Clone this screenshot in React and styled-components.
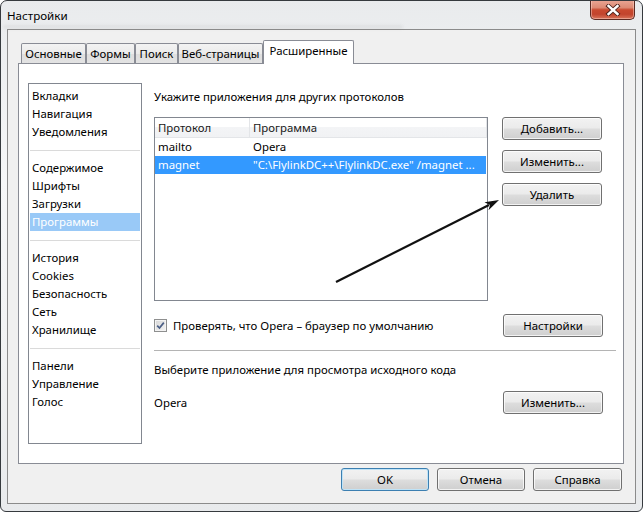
import React from "react";
import styled, { createGlobalStyle, css } from "styled-components";

const GlobalStyle = createGlobalStyle`
  html, body { margin: 0; padding: 0; background: #ffffff; }
  body {
    font-family: "Noto Sans", "Open Sans", sans-serif;
    font-size: 11.4px;
    color: #000;
  }
  * { box-sizing: border-box; }
`;

const Window = styled.div`
  position: relative;
  width: 643px;
  height: 512px;
  border: 1px solid #363a3e;
  border-radius: 7px 7px 6px 6px;
  background: linear-gradient(180deg, #e9ebed 0%, #f6f7f8 35%, #f1f2f3 70%, #e8eaec 100%);
  padding: 0 6px 7px 6px;
  display: flex;
  flex-direction: column;
  overflow: hidden;
`;

const TitleBar = styled.div`
  height: 28px;
  display: flex;
  align-items: flex-start;
  flex-shrink: 0;
`;

const TitleStack = styled.div`
  display: flex;
  flex-direction: column;
`;

const Title = styled.div`
  margin-top: 8px;
  line-height: 14px;
  font-size: 11.6px;
  color: #000;
`;

const GlassHaze = styled.div`
  margin-top: 2px;
  margin-left: -4px;
  width: 400px;
  height: 4px;
  border-radius: 2px;
  background: rgba(90, 90, 90, 0.08);
  filter: blur(1.8px);
`;

const CloseButton = styled.div`
  margin-left: auto;
  margin-right: 1px;
  margin-top: -1px;
  width: 45px;
  height: 20px;
  border: 1px solid #5b2a22;
  border-top: none;
  border-radius: 0 0 5px 5px;
  background: linear-gradient(180deg, #eba796 0%, #dd8a74 40%, #c9492f 52%, #c2442d 75%, #d9745a 100%);
  box-shadow: inset 0 0 0 1px rgba(255, 220, 210, 0.45);
  display: flex;
  align-items: center;
  justify-content: center;
`;

const Client = styled.div`
  flex: 1;
  border: 1px solid #8b8b8b;
  background: #f0f0f0;
  padding: 10px 11px 0 10px;
  display: flex;
  flex-direction: column;
`;

const TabStrip = styled.div`
  position: relative;
  z-index: 1;
  height: 23px;
  display: flex;
  align-items: flex-end;
  padding-left: 3px;
`;

const Tab = styled.div`
  width: ${(p) => p.$w}px;
  height: 20px;
  border: 1px solid #898c95;
  border-bottom: none;
  border-radius: 2px 2px 0 0;
  background: linear-gradient(180deg, #f3f3f3 0%, #ebebeb 50%, #dedede 51%, #e3e3e3 100%);
  display: flex;
  align-items: center;
  justify-content: center;
  line-height: 16px;
  white-space: nowrap;
  ${(p) =>
    p.$active &&
    css`
      height: 24px;
      margin-bottom: -1px;
      background: #ffffff;
      align-items: flex-start;
      padding-top: 2px;
    `}
`;

const Panel = styled.div`
  height: 401px;
  border: 1px solid #898c95;
  background: #ffffff;
  padding: 19px 7px 19px 9px;
  display: flex;
`;

const SideList = styled.div`
  width: 114px;
  border: 1px solid #828790;
  padding-top: 3px;
  display: flex;
  flex-direction: column;
`;

const ListItem = styled.div`
  height: 18px;
  line-height: 18px;
  margin: 0 1px;
  padding-left: 2px;
  white-space: nowrap;
  ${(p) =>
    p.$selected &&
    css`
      background: #99c9f7;
      color: #ffffff;
    `}
`;

const ListSep = styled.div`
  height: 18px;
  display: flex;
  align-items: center;
  padding: 0 1px;
  &::after {
    content: "";
    flex: 1;
    height: 1px;
    background: #dadada;
  }
`;

const Main = styled.div`
  flex: 1;
  margin-left: 12px;
  display: flex;
  flex-direction: column;
`;

const Label = styled.div`
  line-height: 16px;
  margin-top: ${(p) => p.$mt || 0}px;
  white-space: nowrap;
`;

const ListRow = styled.div`
  margin-top: 12px;
  display: flex;
  align-items: flex-start;
  gap: 14px;
`;

const ListView = styled.div`
  width: 334px;
  height: 184px;
  border: 1px solid #828790;
  background: #fff;
  display: flex;
  flex-direction: column;
`;

const HeaderRow = styled.div`
  display: flex;
  height: 20px;
  border-bottom: 1px solid #e3e5e8;
  background: linear-gradient(180deg, #ffffff 0%, #ffffff 45%, #f3f4f6 50%, #f1f2f4 100%);
`;

const HeaderCell = styled.div`
  width: ${(p) => (p.$w ? `${p.$w}px` : "auto")};
  flex: ${(p) => (p.$w ? "none" : 1)};
  padding-left: 3px;
  line-height: 19px;
  color: #1a1a1a;
  border-right: 1px solid #e3e5e8;
`;

const Row = styled.div`
  display: flex;
  height: 18px;
  line-height: 18px;
  margin-right: 1px;
  ${(p) =>
    p.$selected &&
    css`
      background: #3399ff;
      color: #ffffff;
    `}
`;

const Cell = styled.div`
  width: ${(p) => (p.$w ? `${p.$w}px` : "auto")};
  flex: ${(p) => (p.$w ? "none" : 1)};
  padding-left: 3px;
  white-space: nowrap;
  overflow: hidden;
`;

const ButtonColumn = styled.div`
  display: flex;
  flex-direction: column;
  gap: 10px;
`;

const Button = styled.div`
  width: ${(p) => p.$w || 100}px;
  height: 23px;
  border: 1px solid #707070;
  border-radius: 3px;
  background: linear-gradient(180deg, #f2f2f2 0%, #ebebeb 48%, #dddddd 52%, #cfcfcf 100%);
  box-shadow: inset 0 0 0 1px rgba(255, 255, 255, 0.75);
  display: flex;
  align-items: center;
  justify-content: center;
  line-height: 16px;
  white-space: nowrap;
  ${(p) =>
    p.$default &&
    css`
      border-color: #3c7fb1;
      box-shadow: inset 0 0 0 1px #bfe3f7;
    `}
`;

const OptionRow = styled.div`
  margin-top: ${(p) => p.$mt || 0}px;
  height: 23px;
  display: flex;
  align-items: center;
  padding-right: 13px;
`;

const Check = styled.div`
  width: 13px;
  height: 13px;
  border: 1px solid #8e8f8f;
  background: linear-gradient(135deg, #d6d6d6 0%, #f4f4f4 100%);
  box-shadow: inset 0 0 0 1px #f3f3f3;
  display: flex;
  align-items: center;
  justify-content: center;
  margin-right: 6px;
`;

const Push = styled.div`
  margin-left: auto;
`;

const Separator = styled.div`
  margin-top: 13px;
  height: 1px;
  background: #b4b4b4;
`;

const Footer = styled.div`
  margin-top: 4px;
  display: flex;
  justify-content: flex-end;
  gap: 8px;
  padding-right: 2px;
`;

const Overlay = styled.svg`
  position: absolute;
  left: -1px;
  top: -1px;
  width: 643px;
  height: 512px;
  pointer-events: none;
`;

const sideGroups = [
  ["Вкладки", "Навигация", "Уведомления"],
  ["Содержимое", "Шрифты", "Загрузки", "Программы"],
  ["История", "Cookies", "Безопасность", "Сеть", "Хранилище"],
  ["Панели", "Управление", "Голос"],
];

const tabs = [
  { label: "Основные", w: 65 },
  { label: "Формы", w: 49 },
  { label: "Поиск", w: 43 },
  { label: "Веб-страницы", w: 85 },
  { label: "Расширенные", w: 91, active: true },
];

export default function App() {
  return (
    <>
      <GlobalStyle />
      <Window>
        <TitleBar>
          <TitleStack>
            <Title>Настройки</Title>
            <GlassHaze />
          </TitleStack>
          <CloseButton>
            <svg width="16" height="12" viewBox="0 0 16 12">
              <path d="M3.5 2 L12.5 10 M12.5 2 L3.5 10" stroke="#4a211b" strokeWidth="4.2" strokeLinecap="square" />
              <path d="M3.5 2 L12.5 10 M12.5 2 L3.5 10" stroke="#ffffff" strokeWidth="2.4" strokeLinecap="square" />
            </svg>
          </CloseButton>
        </TitleBar>
        <Client>
          <TabStrip>
            {tabs.map((t) => (
              <Tab key={t.label} $w={t.w} $active={t.active}>
                {t.label}
              </Tab>
            ))}
          </TabStrip>
          <Panel>
            <SideList>
              {sideGroups.map((g, gi) => (
                <React.Fragment key={gi}>
                  {gi > 0 && <ListSep />}
                  {g.map((item) => (
                    <ListItem key={item} $selected={item === "Программы"}>
                      {item}
                    </ListItem>
                  ))}
                </React.Fragment>
              ))}
            </SideList>
            <Main>
              <Label $mt={6}>Укажите приложения для других протоколов</Label>
              <ListRow>
                <ListView>
                  <HeaderRow>
                    <HeaderCell $w={95}>Протокол</HeaderCell>
                    <HeaderCell>Программа</HeaderCell>
                  </HeaderRow>
                  <Row>
                    <Cell $w={95}>mailto</Cell>
                    <Cell>Opera</Cell>
                  </Row>
                  <Row $selected>
                    <Cell $w={95}>magnet</Cell>
                    <Cell>"C:\FlylinkDC++\FlylinkDC.exe" /magnet ...</Cell>
                  </Row>
                </ListView>
                <ButtonColumn>
                  <Button>Добавить...</Button>
                  <Button>Изменить...</Button>
                  <Button>Удалить</Button>
                </ButtonColumn>
              </ListRow>
              <OptionRow $mt={13}>
                <Check>
                  <svg width="9" height="9" viewBox="0 0 9 9">
                    <path d="M1.2 4.6 L3.5 7 L7.8 1.6" fill="none" stroke="#4b5f86" strokeWidth="1.7" />
                  </svg>
                </Check>
                Проверять, что Opera – браузер по умолчанию
                <Push>
                  <Button>Настройки</Button>
                </Push>
              </OptionRow>
              <Separator />
              <Label $mt={11}>Выберите приложение для просмотра исходного кода</Label>
              <OptionRow $mt={13}>
                Opera
                <Push>
                  <Button>Изменить...</Button>
                </Push>
              </OptionRow>
            </Main>
          </Panel>
          <Footer>
            <Button $w={88} $default>OK</Button>
            <Button $w={88}>Отмена</Button>
            <Button $w={89}>Справка</Button>
          </Footer>
        </Client>
        <Overlay viewBox="0 0 643 512">
          <line x1="336" y1="282" x2="489" y2="205" stroke="#111" strokeWidth="2.2" />
          <polygon points="499,200 484.5,202.3 490,205 488.5,210.3" fill="#111" />
        </Overlay>
      </Window>
    </>
  );
}
